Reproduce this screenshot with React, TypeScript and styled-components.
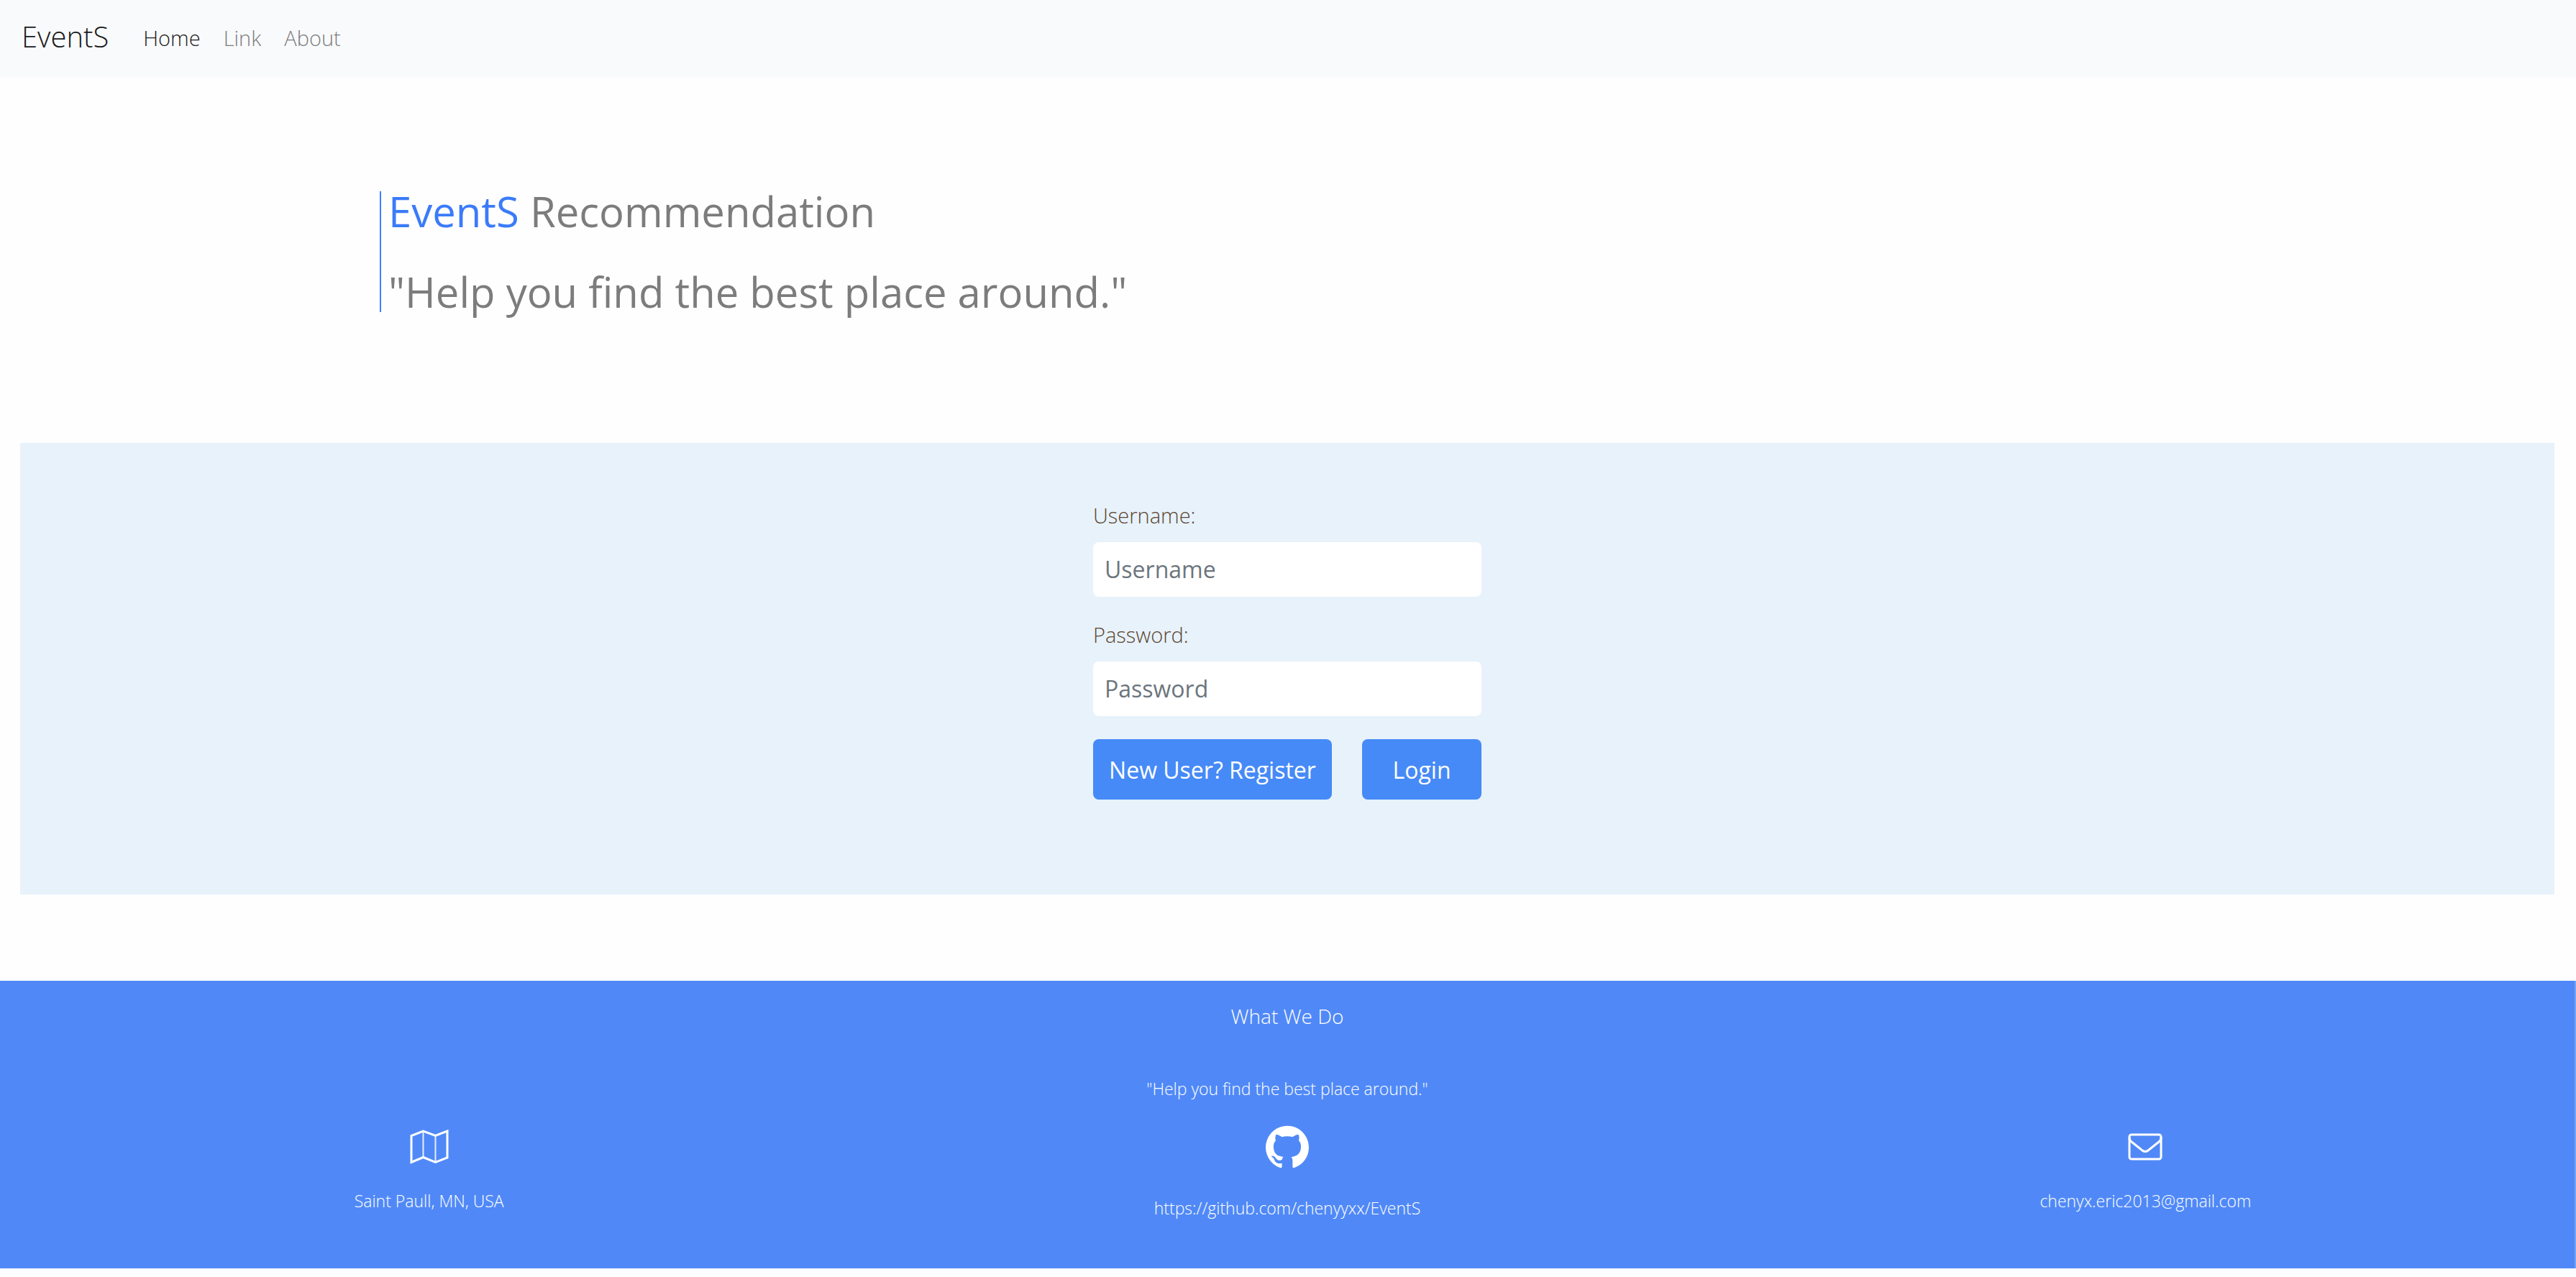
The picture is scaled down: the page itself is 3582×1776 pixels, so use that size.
import React from "react";
import styled, { createGlobalStyle } from "styled-components";

const GlobalStyle = createGlobalStyle`
  *, *::before, *::after { box-sizing: border-box; }
  body {
    margin: 0;
    background: #fefefe;
    font-family: "Open Sans", "Noto Sans", sans-serif;
    font-weight: 300;
  }
  h1, h2, p { margin: 0; font-weight: inherit; }
  a { color: inherit; text-decoration: none; }
`;

const Page = styled.div`
  width: 100%;
`;

const NavBar = styled.nav`
  display: flex;
  align-items: center;
  height: 108px;
  padding: 0 30px 2px;
  background: #f9fafc;
`;

const Brand = styled.a`
  margin-right: 32px;
  padding-bottom: 4px;
  font-size: 40px;
  line-height: 60px;
  color: #191a1a;
`;

const NavList = styled.ul`
  display: flex;
  margin: 0;
  padding: 0;
  list-style: none;
`;

const NavLink = styled.a<{ $active?: boolean }>`
  display: block;
  padding: 0 16px;
  font-size: 29px;
  line-height: 44px;
  color: ${(p) => (p.$active ? "#191a1a" : "#7c7d7e")};
`;

const Hero = styled.header`
  padding: 158px 0 182px 528px;
`;

const HeroText = styled.div`
  display: flex;
  flex-direction: column;
  justify-content: space-between;
  height: 168px;
  padding-left: 10px;
  border-left: 2px solid #427ffb;
`;

const HeroLine = styled.h1`
  font-size: 58px;
  font-weight: 400;
  line-height: 56px;
  color: #7c7c7c;
`;

const Accent = styled.span`
  color: #3b7bfa;
`;

const LoginPanel = styled.main`
  display: flex;
  justify-content: center;
  margin: 0 30px 0 28px;
  padding: 80px 0 132px;
  background: #e7f2fb;
`;

const LoginForm = styled.form`
  display: flex;
  flex-direction: column;
  gap: 32px;
  width: 540px;
`;

const Field = styled.div`
  display: flex;
  flex-direction: column;
  gap: 16px;
`;

const Label = styled.label`
  font-size: 29px;
  line-height: 42px;
  color: #5c4530;
`;

const TextInput = styled.input`
  width: 100%;
  height: 76px;
  padding: 0 16px 2px;
  border: 0;
  border-radius: 8px;
  background: #fff;
  font-family: inherit;
  font-size: 32px;
  color: #495057;

  &::placeholder { color: #6c757d; opacity: 1; }
`;

const Actions = styled.div`
  display: flex;
  justify-content: space-between;
`;

const Button = styled.button<{ $width: number }>`
  width: ${(p) => p.$width}px;
  height: 84px;
  padding: 0;
  border: 0;
  border-radius: 8px;
  background: #468af7;
  font-family: inherit;
  font-size: 32px;
  font-weight: 400;
  color: #fff;
`;

const Footer = styled.footer`
  margin-top: 120px;
  padding: 28px 0 66px;
  border-right: 2px solid #77a3f9;
  background: #5089f7;
  color: #fff;
  text-align: center;
`;

const FooterTitle = styled.h2`
  font-size: 28px;
  line-height: 42px;
`;

const FooterText = styled.p`
  font-size: 23px;
  line-height: 36px;
`;

const Motto = styled(FooterText)`
  margin-top: 62px;
`;

const Columns = styled.div`
  display: grid;
  grid-template-columns: repeat(3, 1fr);
  margin-top: 32px;
`;

const Contact = styled.div<{ $gap: number }>`
  display: flex;
  flex-direction: column;
  align-items: center;
  gap: ${(p) => p.$gap}px;
`;

const IconBox = styled.div`
  display: flex;
  align-items: center;
  height: 62px;
`;

const MapIcon = () => (
  <svg width="54" height="48" viewBox="0 0 54 48" fill="none" stroke="#fff" aria-hidden="true">
    <path d="M2 8.500v37l16.500-7 17 7 16.500-6.500V2L35.500 8.500 18.500 2z" strokeWidth="3" />
    <path d="M18.500 2v37M35.500 8v37" strokeWidth="2" strokeOpacity="0.85" />
  </svg>
);

const GithubIcon = () => (
  <svg width="60" height="60" viewBox="0 0 24 24" fill="#fff" aria-hidden="true">
    <path d="M12 .297c-6.63 0-12 5.373-12 12 0 5.303 3.438 9.8 8.205 11.385.6.113.82-.258.82-.577 0-.285-.01-1.04-.015-2.04-3.338.724-4.042-1.61-4.042-1.61C4.422 18.07 3.633 17.7 3.633 17.7c-1.087-.744.084-.729.084-.729 1.205.084 1.838 1.236 1.838 1.236 1.07 1.835 2.809 1.305 3.495.998.108-.776.417-1.305.76-1.605-2.665-.3-5.466-1.332-5.466-5.93 0-1.31.465-2.38 1.235-3.22-.135-.303-.54-1.523.105-3.176 0 0 1.005-.322 3.3 1.23.96-.267 1.98-.399 3-.405 1.02.006 2.04.138 3 .405 2.28-1.552 3.285-1.23 3.285-1.23.645 1.653.24 2.873.12 3.176.765.84 1.23 1.91 1.23 3.22 0 4.61-2.805 5.625-5.475 5.92.42.36.81 1.096.81 2.22 0 1.606-.015 2.896-.015 3.286 0 .315.21.69.825.57C20.565 22.092 24 17.592 24 12.297c0-6.627-5.373-12-12-12" />
  </svg>
);

const MailIcon = () => (
  <svg width="48" height="38" viewBox="0 0 48 38" fill="none" stroke="#fff" strokeWidth="3" aria-hidden="true">
    <rect x="2" y="2" width="44" height="34" rx="3" />
    <path d="M2 6q0 4 3 6l15 12q4 3 8 0l15-12q3-2 3-6" />
  </svg>
);

export default function App() {
  return (
    <>
      <GlobalStyle />
      <Page>
        <NavBar>
          <Brand href="#">EventS</Brand>
          <NavList>
            <li><NavLink href="#" $active>Home</NavLink></li>
            <li><NavLink href="#">Link</NavLink></li>
            <li><NavLink href="#">About</NavLink></li>
          </NavList>
        </NavBar>
        <Hero>
          <HeroText>
            <HeroLine><Accent>EventS</Accent> Recommendation</HeroLine>
            <HeroLine as="p">"Help you find the best place around."</HeroLine>
          </HeroText>
        </Hero>
        <LoginPanel>
          <LoginForm>
            <Field>
              <Label htmlFor="username">Username:</Label>
              <TextInput id="username" type="text" placeholder="Username" />
            </Field>
            <Field>
              <Label htmlFor="password">Password:</Label>
              <TextInput id="password" type="password" placeholder="Password" />
            </Field>
            <Actions>
              <Button type="button" $width={332}>New User? Register</Button>
              <Button type="submit" $width={166}>Login</Button>
            </Actions>
          </LoginForm>
        </LoginPanel>
        <Footer>
          <FooterTitle>What We Do</FooterTitle>
          <Motto>"Help you find the best place around."</Motto>
          <Columns>
            <Contact $gap={26}>
              <IconBox><MapIcon /></IconBox>
              <FooterText>Saint Paull, MN, USA</FooterText>
            </Contact>
            <Contact $gap={36}>
              <IconBox><GithubIcon /></IconBox>
              <FooterText as="a" href="https://github.com/chenyyxx/EventS">https://github.com/chenyyxx/EventS</FooterText>
            </Contact>
            <Contact $gap={26}>
              <IconBox><MailIcon /></IconBox>
              <FooterText as="a" href="mailto:chenyx.eric2013@gmail.com">chenyx.eric2013@gmail.com</FooterText>
            </Contact>
          </Columns>
        </Footer>
      </Page>
    </>
  );
}
